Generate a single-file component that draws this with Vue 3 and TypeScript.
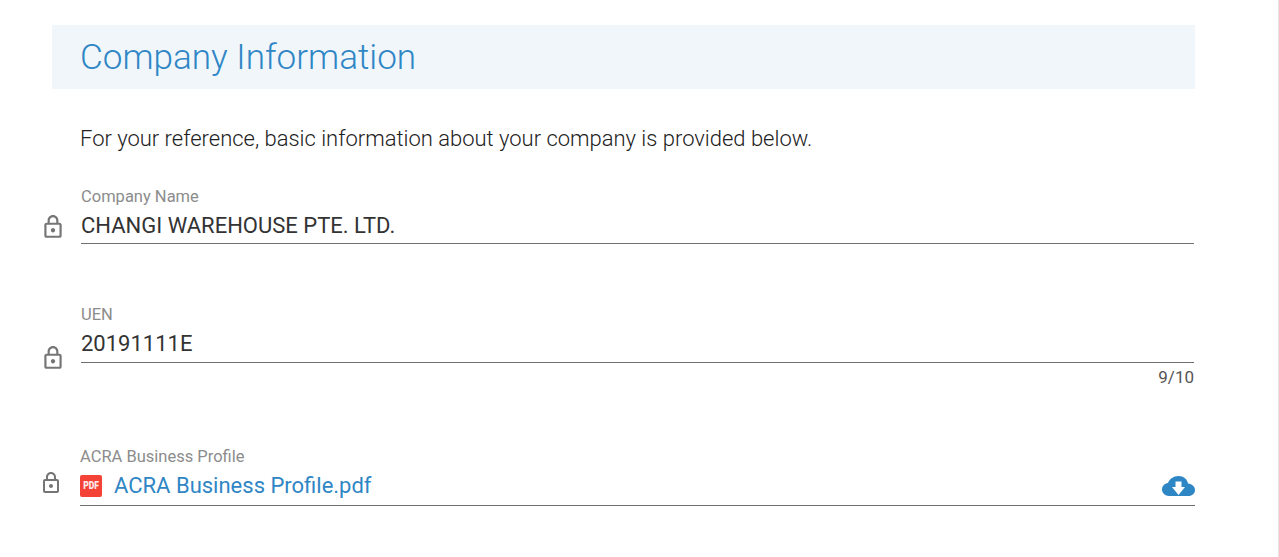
<script setup lang="ts">
interface Field { label: string; value: string; counter?: string }
const fields: Field[] = [
  { label: 'Company Name', value: 'CHANGI WAREHOUSE PTE. LTD.' },
  { label: 'UEN', value: '20191111E', counter: '9/10' },
]
const lockPath = 'M18 8h-1V6c0-2.76-2.24-5-5-5S7 3.24 7 6v2H6c-1.100 0-2 .9-2 2v10c0 1.100.9 2 2 2h12c1.100 0 2-.9 2-2V10c0-1.100-.9-2-2-2zM9 6c0-1.660 1.340-3 3-3s3 1.340 3 3v2H9V6zm9 14H6V10h12v10zm-6-3c1.100 0 2-.9 2-2s-.9-2-2-2-2 .9-2 2 .9 2 2 2z'
</script>

<template>
  <div class="page">
    <section class="panel">
      <header class="head"><h1>Company Information</h1></header>
      <p class="intro">For your reference, basic information about your company is provided below.</p>

      <div v-for="f in fields" :key="f.label" class="field" :class="{ 'has-counter': f.counter }">
        <svg class="lock" viewBox="0 0 24 24"><path fill="#757575" :d="lockPath" /></svg>
        <div class="control">
          <label>{{ f.label }}</label>
          <div class="value">{{ f.value }}</div>
          <div v-if="f.counter" class="counter">{{ f.counter }}</div>
        </div>
      </div>

      <div class="field file">
        <svg class="lock" viewBox="0 0 24 24"><path fill="#757575" :d="lockPath" /></svg>
        <div class="control">
          <label>ACRA Business Profile</label>
          <div class="value link">
            <span class="pdf"><span class="pdf-text">PDF</span></span>
            <span class="name">ACRA Business Profile.pdf</span>
            <svg class="cloud" width="33" height="20" viewBox="0 0 33 20">
              <path fill="#2f86c5" d="M7 20C3 20 0 17 0 13.500 0 10 2.500 7.500 6 7 7.500 3 11.500 0 16.500 0c5 0 9 3.500 9.500 7.500 4 .5 7 3 7 6.500 0 3.500-3 6-6.500 6z" />
              <path fill="#fff" d="M13.500 5.500h6V11H23l-6.500 8L10 11h3.500z" />
            </svg>
          </div>
        </div>
      </div>
    </section>
  </div>
</template>

<style>
html, body { margin: 0; background: #fff; }
</style>

<style scoped>
.page {
  box-sizing: border-box;
  height: 557px;
  overflow: hidden;
  padding: 25px 0 0 40px;
  border-right: 1px solid #e3e3e3;
  font-family: Roboto, "Liberation Sans", sans-serif;
}
.panel { width: 1155px; }
.head {
  margin-left: 12px;
  height: 64px;
  background: #f1f6fb;
  padding-left: 28px;
  display: flex;
  align-items: center;
}
h1 {
  margin: 0;
  font-size: 35.1px;
  font-weight: 300;
  color: #2f86c5;
  line-height: 64px;
}
.intro {
  margin: 37px 0 0 40px;
  font-size: 21.97px;
  font-weight: 300;
  line-height: 26px;
  color: #212121;
}
.field {
  display: flex;
  align-items: flex-start;
  margin-top: 34px;
  height: 60px;
  position: relative;
}
.field + .field { margin-top: 58px; }
.lock { position: absolute; left: 0; top: 28px; width: 26px; height: 26px; }
.has-counter .lock { top: 41px; }
.control { margin-left: 41px; width: 1113px; }
label {
  display: block;
  font-size: 16.5px;
  line-height: 22px;
  margin-bottom: -2px;
  color: #8c8c8c;
  font-weight: 400;
}
.value {
  height: 37px;
  line-height: 40px;
  font-size: 22px;
  color: #333;
  border-bottom: 1px solid #707070;
}
.has-counter .value { height: 38px; }
.counter {
  font-size: 17px;
  line-height: 20px;
  text-align: right;
  color: #555;
  margin-top: 4px;
}
.field.file { margin-top: 82px; }
.file .control { margin-left: 40px; width: 1115px; }
.file .lock { left: -1px; top: 25px; width: 24px; height: 24px; }
.value.link {
  display: flex;
  align-items: center;
  height: 39px;
  line-height: 42px;
  color: #2f86c5;
}
.pdf {
  flex: none;
  width: 22px;
  height: 22px;
  border-radius: 2px;
  background: #f44336;
  margin-right: 12px;
  display: flex;
  justify-content: center;
  align-items: center;
}
.pdf-text {
  display: block;
  color: #fdeaea;
  font-size: 11px;
  font-weight: 900;
  line-height: 22px;
  transform: scaleX(0.78);
}
.name { flex: 1; }
.cloud { display: block; }
</style>
